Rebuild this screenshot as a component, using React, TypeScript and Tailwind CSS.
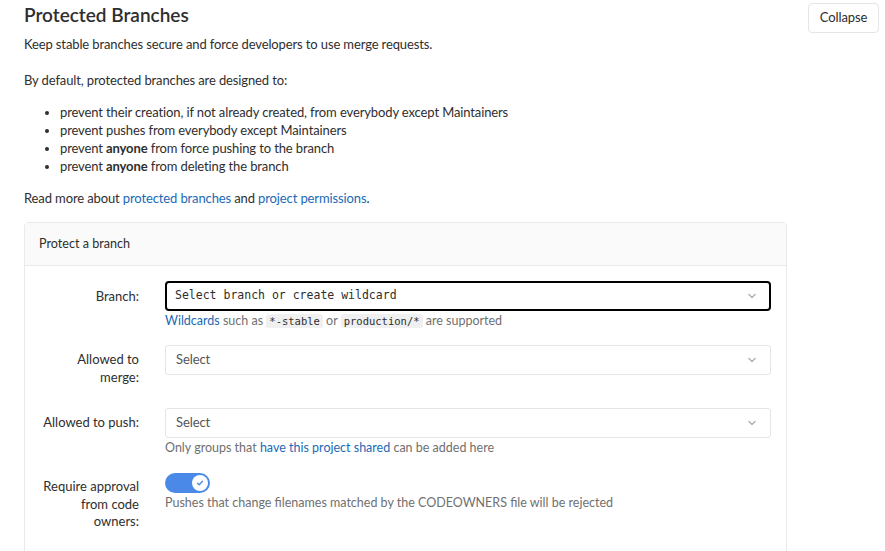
import React from 'react';

const font = { fontFamily: '"Lato", "Open Sans", sans-serif' };
const mono = { fontFamily: '"DejaVu Sans Mono", monospace' };

function Chevron() {
    return (
        <svg width="10" height="10" viewBox="0 0 10 10" className="text-[#b0b0b0]">
            <path d="M2 3.5 L5 6.5 L8 3.5" fill="none" stroke="currentColor" strokeWidth="1.4" strokeLinecap="round" strokeLinejoin="round" />
        </svg>
    );
}

function SelectBox({ text, focused, code }: { text: string; focused?: boolean; code?: boolean }) {
    return (
        <div
            className={
                focused
                    ? 'h-[30px] w-full flex items-center justify-between rounded-[4px] border-2 border-black pl-[8px] pr-[12px] bg-white'
                    : 'h-[30px] w-full flex items-center justify-between rounded-[3px] border border-[#e5e5e5] pl-[10px] pr-[13px] bg-white'
            }
        >
            <span
                className={code ? 'text-[11.5px] text-[#2e2e2e]' : 'text-[13px] tracking-[-0.1px] text-[#555]'}
                style={code ? mono : undefined}
            >
                {text}
            </span>
            <Chevron />
        </div>
    );
}

function Code({ children }: { children: React.ReactNode }) {
    return (
        <code className="px-[3px] py-[1px] rounded-[3px] bg-[#f0f0f0] text-[10.5px] text-[#2e2e2e]" style={mono}>
            {children}
        </code>
    );
}

export default function App() {
    return (
        <div className="w-[885px] h-[551px] overflow-hidden bg-white text-[#2e2e2e]" style={font}>
            <div className="flex">
                <div className="pl-[24px] flex-1">
                    <h4 className="text-[19px] font-semibold leading-[26px] pt-[2px] text-[#2e2e2e]">Protected Branches</h4>
                    <p className="text-[13px] tracking-[-0.12px] leading-[20px] mt-[6px]">
                        Keep stable branches secure and force developers to use merge requests.
                    </p>
                    <p className="text-[13px] tracking-[-0.12px] leading-[20px] mt-[16px]">By default, protected branches are designed to:</p>
                    <ul className="list-disc pl-[36px] mt-[13px] text-[13px] tracking-[-0.12px] leading-[18px]">
                        <li>prevent their creation, if not already created, from everybody except Maintainers</li>
                        <li>prevent pushes from everybody except Maintainers</li>
                        <li>prevent <b>anyone</b> from force pushing to the branch</li>
                        <li>prevent <b>anyone</b> from deleting the branch</li>
                    </ul>
                    <p className="text-[13px] tracking-[-0.12px] leading-[20px] mt-[13px]">
                        Read more about <span className="text-[#1b69b6]">protected branches</span> and{' '}
                        <span className="text-[#1b69b6]">project permissions</span>.
                    </p>
                </div>
                <div className="pt-[3px] pr-[6px]">
                    <button className="h-[30px] w-[71px] rounded-[4px] border border-[#e5e5e5] bg-white text-[13px] tracking-[-0.1px] text-[#2e2e2e]">
                        Collapse
                    </button>
                </div>
            </div>

            <div className="ml-[24px] mt-[14px] w-[763px] border border-[#eaeaea] rounded-t-[4px]">
                <div className="h-[43px] bg-[#fafafa] border-b border-[#eaeaea] flex items-center pl-[14px] pt-[1px] text-[12.6px]">
                    Protect a branch
                </div>
                <div className="pl-[16px] pr-[15px] pt-[15px] pb-[30px] text-[13px] text-[#2e2e2e]">
                    <div className="flex gap-[26px]">
                        <div className="w-[98px] shrink-0 text-right leading-[18px] pt-[6px]">Branch:</div>
                        <div className="flex-1">
                            <SelectBox text="Select branch or create wildcard" focused code />
                            <div className="text-[12.5px] text-[#707070] mt-[1px] leading-[18px]">
                                <span className="text-[#1b69b6]">Wildcards</span> such as <Code>*-stable</Code> or{' '}
                                <Code>production/*</Code> are supported
                            </div>
                        </div>
                    </div>

                    <div className="flex gap-[26px] mt-[15px]">
                        <div className="w-[98px] shrink-0 text-right leading-[18px] pt-[5px]">Allowed to merge:</div>
                        <div className="flex-1">
                            <SelectBox text="Select" />
                        </div>
                    </div>

                    <div className="flex gap-[26px] mt-[22px]">
                        <div className="w-[98px] shrink-0 text-right leading-[18px] pt-[5px]">Allowed to push:</div>
                        <div className="flex-1">
                            <SelectBox text="Select" />
                            <div className="text-[12.5px] text-[#707070] mt-[1px] leading-[18px]">
                                Only groups that <span className="text-[#1b69b6]">have this project shared</span> can be added here
                            </div>
                        </div>
                    </div>

                    <div className="flex gap-[26px] mt-[16px]">
                        <div className="w-[98px] shrink-0 text-right leading-[17.5px] pt-[5px]">Require approval from code owners:</div>
                        <div className="flex-1">
                            <div className="w-[45px] h-[20px] rounded-full bg-[#4a89e8] flex items-center justify-end pr-[2px]">
                                <div className="w-[16px] h-[16px] rounded-full bg-white flex items-center justify-center">
                                    <svg width="8" height="8" viewBox="0 0 8 8">
                                        <path d="M1.5 4.2 L3.2 5.8 L6.5 2.3" fill="none" stroke="#4a89e8" strokeWidth="1.3" strokeLinecap="round" strokeLinejoin="round" />
                                    </svg>
                                </div>
                            </div>
                            <div className="text-[12.5px] text-[#707070] mt-[1px] leading-[18px]">
                                Pushes that change filenames matched by the CODEOWNERS file will be rejected
                            </div>
                        </div>
                    </div>
                </div>
            </div>
        </div>
    );
}
